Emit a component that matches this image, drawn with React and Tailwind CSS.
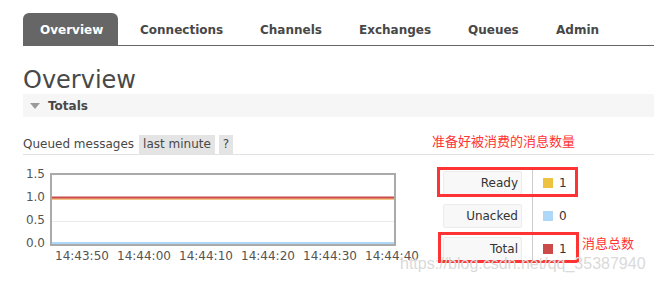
import React from 'react';

const tabs = [
  { name: 'Connections', w: 'w-[120px]' },
  { name: 'Channels', w: 'w-[99px]' },
  { name: 'Exchanges', w: 'w-[109px]' },
  { name: 'Queues', w: 'w-[88px]' },
  { name: 'Admin', w: 'w-[80px]' },
];

const yLabels = ['1.5', '1.0', '0.5', '0.0'];
const xLabels = ['14:43:50', '14:44:00', '14:44:10', '14:44:20', '14:44:30', '14:44:40'];

const legend = [
  { label: 'Ready', color: 'bg-[#edc240]', value: 1 },
  { label: 'Unacked', color: 'bg-[#afd8f8]', value: 0 },
  { label: 'Total', color: 'bg-[#cb4b4b]', value: 1 },
];

const App = () => {
  return (
    <div className="relative w-[654px] h-[284px] overflow-hidden bg-white pl-[23px] text-[#484848] font-['DejaVu_Sans',sans-serif]">
      {/* Tabs */}
      <div className="mt-[13px] flex h-[33px] border-b border-[#666] text-[12px] font-bold">
        <div className="flex w-[95px] items-center rounded-t-[6px] bg-[#666] pl-[17px] pt-[1px] text-white">
          Overview
        </div>
        {tabs.map((t) => (
          <div key={t.name} className={`flex ${t.w} items-center pl-[22px] pt-[1px]`}>
            {t.name}
          </div>
        ))}
      </div>

      <h1 className="mt-[20px] h-[28px] text-[24px] leading-[28px] font-normal">Overview</h1>

      {/* Totals bar */}
      <div className="flex h-[23px] items-center bg-[#f6f6f6] pl-[7px] text-[12px] font-bold">
        <svg width="10" height="6" viewBox="0 0 10 6" className="mr-[8px]">
          <polygon points="0,0 10,0 5,6" fill="#9a9a9a" />
        </svg>
        Totals
      </div>

      {/* Queued messages */}
      <div className="mt-[18px] flex items-end border-b border-[#e2e2e2] text-[12px] leading-[19px]">
        <span>Queued messages</span>
        <span className="ml-[5px] bg-[#e4e4e4] px-[4px]">last minute</span>
        <span className="ml-[4px] bg-[#e4e4e4] px-[4px]">?</span>
      </div>

      {/* Chart + legend */}
      <div className="mt-[13px] flex items-start">
        <div className="flex h-[82px] w-[27px] flex-col justify-between pr-[5px] text-right text-[12px] leading-[13px] text-[#545454]">
          {yLabels.map((l) => (
            <span key={l}>{l}</span>
          ))}
        </div>
        <div className="mt-[5px] w-[346px] shrink-0">
          <div className="h-[73px] w-[346px] border-2 border-[#aaa] bg-white">
            <svg width="342" height="69" viewBox="0 0 342 69" className="block">
              <line x1="0" y1="46.5" x2="342" y2="46.5" stroke="#ececec" strokeWidth="1" />
              <line x1="0" y1="24" x2="342" y2="24" stroke="#f0b060" strokeWidth="1.5" />
              <line x1="0" y1="22.5" x2="342" y2="22.5" stroke="#cb4b4b" strokeWidth="2" />
              <line x1="0" y1="68" x2="342" y2="68" stroke="#afd8f8" strokeWidth="2" />
            </svg>
          </div>
          <div className="mt-[4px] flex pl-[5px] text-[12px] leading-[13px] text-[#545454]">
            {xLabels.map((l) => (
              <span key={l} className="w-[62px] shrink-0">{l}</span>
            ))}
          </div>
        </div>

        <div className="relative ml-[47px] flex text-[12px] text-[#333]">
          <div className="flex w-[90px] flex-col gap-[9px] border-r border-[#ccc] pt-[3px] pb-[1px]">
            {legend.map((r) => (
              <div
                key={r.label}
                className="flex h-[24px] w-[79px] items-center justify-end rounded-[2px] border border-[#ececec] bg-[#f8f8f8] pr-[3px]"
              >
                {r.label}
              </div>
            ))}
          </div>
          <div className="flex flex-col gap-[9px] pt-[3px] pl-[10px]">
            {legend.map((r) => (
              <div key={r.label} className="flex h-[24px] items-center">
                <span className={`h-[10px] w-[10px] ${r.color}`} />
                <span className="ml-[6px]">{r.value}</span>
              </div>
            ))}
          </div>

          {/* red annotation boxes */}
          <div className="absolute left-[-6px] top-[-1px] h-[30px] w-[141px] border-[3px] border-[#f33]" />
          <div className="absolute left-[-5px] top-[64px] h-[31px] w-[141px] border-[3px] border-[#f33]" />
          <div className="absolute left-[139px] top-[66px] whitespace-nowrap text-[13px] leading-[18px] text-[#f33] font-['Noto_Sans_CJK_SC',sans-serif]">
            消息总数
          </div>
        </div>
      </div>

      <div className="absolute left-[432px] top-[132px] whitespace-nowrap text-[13px] leading-[18px] text-[#f33] font-['Noto_Sans_CJK_SC',sans-serif]">
        准备好被消费的消息数量
      </div>

      <div className="absolute left-[400px] top-[255px] whitespace-nowrap text-[16px] leading-[18px] text-[#dadada] font-['Liberation_Sans',sans-serif]">
        https://blog.csdn.net/qq_35387940
      </div>
    </div>
  );
};

export default App;
